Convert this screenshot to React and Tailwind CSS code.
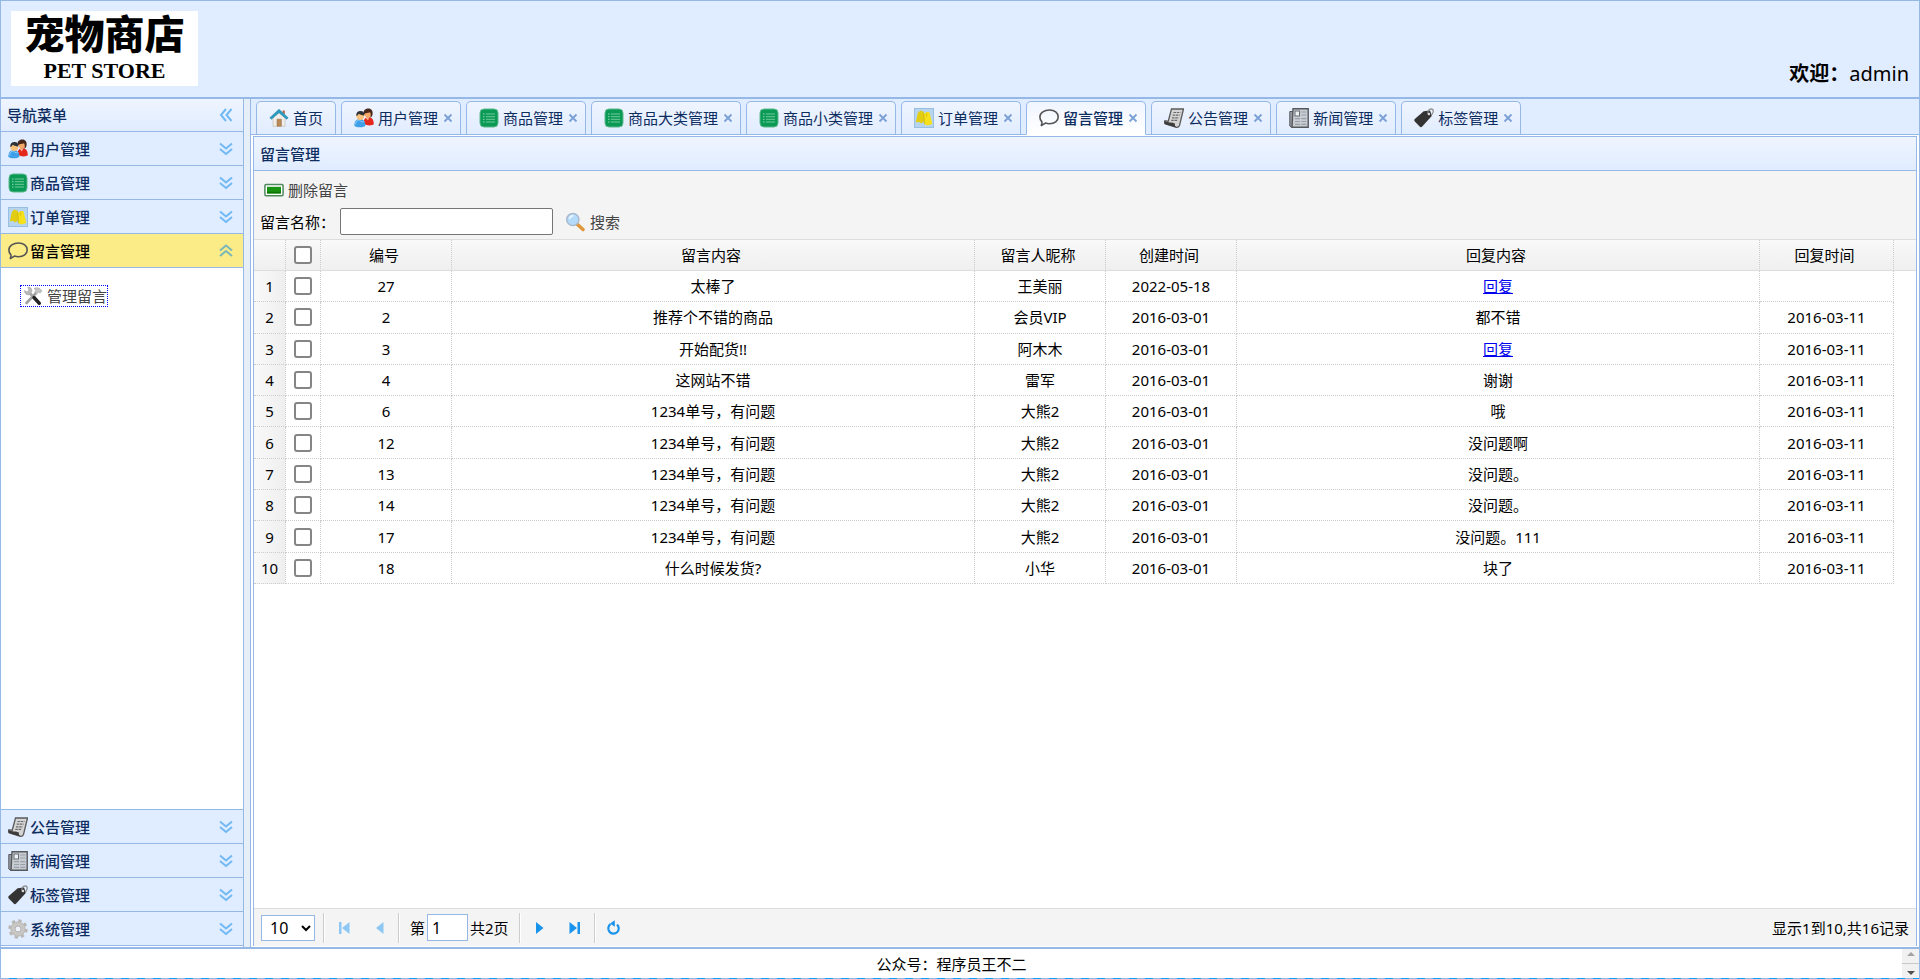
import React, { useState } from "react";

const MENU_TOP = [
  { label: "用户管理", icon: "users" },
  { label: "商品管理", icon: "list" },
  { label: "订单管理", icon: "order" },
];
const MENU_BOTTOM = [
  { label: "公告管理", icon: "scroll" },
  { label: "新闻管理", icon: "news" },
  { label: "标签管理", icon: "tag" },
  { label: "系统管理", icon: "gear" },
];
const TABS = [
  { label: "首页", icon: "home", fixed: true },
  { label: "用户管理", icon: "users" },
  { label: "商品管理", icon: "list" },
  { label: "商品大类管理", icon: "list" },
  { label: "商品小类管理", icon: "list" },
  { label: "订单管理", icon: "order" },
  { label: "留言管理", icon: "bubble", active: true },
  { label: "公告管理", icon: "scroll" },
  { label: "新闻管理", icon: "news" },
  { label: "标签管理", icon: "tag" },
];
const ROWS = [
  ["27", "太棒了", "王美丽", "2022-05-18", null, ""],
  ["2", "推荐个不错的商品", "会员VIP", "2016-03-01", "都不错", "2016-03-11"],
  ["3", "开始配货!!", "阿木木", "2016-03-01", null, "2016-03-11"],
  ["4", "这网站不错", "雷军", "2016-03-01", "谢谢", "2016-03-11"],
  ["6", "1234单号，有问题", "大熊2", "2016-03-01", "哦", "2016-03-11"],
  ["12", "1234单号，有问题", "大熊2", "2016-03-01", "没问题啊", "2016-03-11"],
  ["13", "1234单号，有问题", "大熊2", "2016-03-01", "没问题。", "2016-03-11"],
  ["14", "1234单号，有问题", "大熊2", "2016-03-01", "没问题。", "2016-03-11"],
  ["17", "1234单号，有问题", "大熊2", "2016-03-01", "没问题。111", "2016-03-11"],
  ["18", "什么时候发货?", "小华", "2016-03-01", "块了", "2016-03-11"],
];

const ART = {
  home: (
    <>
      <path d="M4 9.5v8.8h12V9.5L10 4z" fill="#f1eeea" stroke="#c9c4be" strokeWidth=".8" />
      <path d="M8 11.2h4.4v7H8z" fill="#b98a58" stroke="#8f6a44" strokeWidth=".5" />
      <path d="M13.6 2.5h2.2v4l-2.2-2z" fill="#b9624a" />
      <path d="M.8 9.8 10 1.2l9.2 8.6-1.6 1.5L10 4.8l-7.6 6.5z" fill="#2b9bc0" stroke="#1d7f9f" strokeWidth=".5" />
    </>
  ),
  users: (
    <>
      <path d="M9.500 15.500c0-4 1.500-6.300 5-6.300s5.300 2.600 5.300 7.100c-1.800 1.500-7 1.700-10.300-.8z" fill="#e5281c" />
      <path d="M11.300 9.200h4l-1.400 3.300z" fill="#f6b98a" />
      <circle cx="14" cy="5.300" r="3.900" fill="#f3a968" />
      <path d="M9.500 6.500C9 2.500 11 .4 14.200.4c3.300 0 5 2.300 4.300 6.300-.4 1.600-1.200 2.500-2.200 3 .7-2.300.6-4-.3-5.400-2 .9-4.500.6-6.500 2.200z" fill="#47271a" />
      <path d="M.3 17.800c0-4.500 2-6.900 5.500-6.900s5.600 2.400 5.600 6.900c-2.400 2-8.700 2-11.100 0z" fill="#3fa0ea" />
      <path d="M1.500 16.500c.3-2.900 1.700-4.300 4-4.500 1.800 2 3.300 2.200 5 1.500" fill="none" stroke="#8ccbf8" strokeWidth="1" />
      <circle cx="6.300" cy="8" r="3.900" fill="#fbc27e" />
      <path d="M2.300 8C2 4.500 3.800 3 6.600 3.100c2.600 0 4.100 1.700 3.700 4.400-2.800-.2-4.700-1-5.600-1.800C4.200 7 3.300 7.500 2.300 8z" fill="#2e3338" />
    </>
  ),
  list: (
    <>
      <rect x="1" y="1" width="18" height="18" rx="4" fill="#0a9a56" stroke="#5db98c" strokeWidth="1" />
      <path d="M4 6h1.500M4 8.700h1.500M4 11.300h1.500M4 14h1.500" stroke="#8fd6b2" strokeWidth="1" />
      <path d="M6.800 6H16M6.800 8.700H16M6.800 11.300H16M6.800 14H16" stroke="#6fc99b" strokeWidth="1" />
    </>
  ),
  order: (
    <>
      <rect x=".5" y=".5" width="19" height="19" fill="#b6d4ee" stroke="#98bfe2" />
      <path d="m1.800 14.500 2-9.500 2.500-2.500 3.500 1.300.5 9.200-3 2.500-2.500-1.800z" fill="#e3cd12" />
      <path d="m9.800 6 2.500-2 3.200.3L18.300 16l-4.800 1.500-3.300-1.200z" fill="#f6e01a" />
      <path d="m9.700 5.500.7 10.500M12.800 5.500l-.2 3" stroke="#c9b20c" strokeWidth=".8" />
    </>
  ),
  bubble: (
    <path
      d="M10.500 2c5 0 8.700 2.900 8.700 6.900s-3.700 6.900-8.700 6.900c-1.500 0-2.800-.2-4-.7L2 17.800c1-1.500 1.100-2.600.9-3.900C1.600 12.600.9 10.800.9 8.900.9 4.900 5.500 2 10.500 2z"
      fill="none"
      stroke="#555"
      strokeWidth="1.600"
    />
  ),
  scroll: (
    <>
      <path d="M7.500 1h12L15.500 17.500c-.6 1.300-1.500 2-3 1.800L1 15.700c-.8-1.200-.8-2 0-3l3.200.8z" fill="#d4d4d4" stroke="#5a5a5a" strokeWidth="1.300" />
      <path d="M.6 13c3 1.700 8 1.200 10.400 2.600-.5 1.700.2 3 1.500 3.800L2 16.600C.7 15.600.3 14.300.6 13z" fill="#3d3d3d" />
      <path d="M9.500 4.500h7M8.700 7.200h7M8 9.800h6.800M7.300 12.300h6.600" stroke="#6a6a6a" strokeWidth="1.200" strokeDasharray="2.500 .7" />
    </>
  ),
  news: (
    <>
      <path d="M.8 3.500H4V19H2L.8 18z" fill="#9a9fa5" stroke="#55585d" />
      <path d="M4 .8h15.200v18.400H3z" fill="#c7ccd2" stroke="#55585d" strokeWidth="1.400" />
      <rect x="6" y="3" width="4.500" height="5" fill="#eef1f4" stroke="#686c72" />
      <path d="M12.300 4h5M12.300 7h5M6 10.700h5M12.300 10.700h5M6 13.500h5M12.300 13.500h5M6 16.300h5M12.300 16.300h5" stroke="#9aa0a7" strokeWidth="1.200" />
    </>
  ),
  tag: (
    <>
      <path d="M9.700 3.200 16 2.500l2 5.300L8.200 18.600c-.8.7-1.700.7-2.500 0L.8 13.400c-.7-.8-.7-1.500 0-2.300z" fill="#333" />
      <path d="M14.500 7c-1.600-3 0-6 2.500-6.200C20 .8 20 4.500 17.200 7.500" fill="none" stroke="#8b8b8b" strokeWidth="1.200" />
      <circle cx="15" cy="6" r="1.200" fill="#ddd" />
    </>
  ),
  gear: (
    <>
      <circle cx="10" cy="10" r="8" fill="none" stroke="#b9b7b4" strokeWidth="3.400" strokeDasharray="3.140 3.140" />
      <circle cx="10" cy="10" r="5.300" fill="none" stroke="#c9c7c4" strokeWidth="4" />
      <circle cx="10" cy="10" r="7.200" fill="none" stroke="#b3b1ae" strokeWidth=".7" />
      <circle cx="10" cy="10" r="3" fill="#eef2f8" stroke="#a3a19e" strokeWidth=".8" />
    </>
  ),
  tools: (
    <>
      <path d="M6 6.500 16.500 17" stroke="#a5a5a5" strokeWidth="2.600" strokeLinecap="round" />
      <path d="M1.500 4.500 4 6l2-2L4.800 1.400c3-.4 4.700 1.800 3.900 4.600L6 8.800C3.500 9.300 1.300 7.500 1.500 4.500z" fill="#b9b9b9" stroke="#999" strokeWidth=".5" />
      <path d="M13.500 6.500 3.500 17" stroke="#a0a0a0" strokeWidth="2.600" strokeLinecap="round" />
      <path d="M11 2.500c3-1.600 6-.6 8 2.600l-2 2-1.700-.9-1.800 1.700-2-2 1.400-1.600z" fill="#c4c4c4" stroke="#999" strokeWidth=".5" />
      <path d="m11 11.500 5.300 5.800" stroke="#222" strokeWidth="3.400" strokeLinecap="round" />
    </>
  ),
  minus: (
    <>
      <rect x=".9" y="4.600" width="18.200" height="11.200" rx="1.200" fill="#fff" stroke="#4f8a5c" strokeWidth="1.500" />
      <rect x="3" y="6.800" width="14" height="6.800" fill="#18930f" />
      <path d="M3 12.500h14" stroke="#0c7306" strokeWidth="1.500" />
    </>
  ),
  search: (
    <>
      <path d="m12 12 6 5.600" stroke="#e0973c" strokeWidth="3.400" strokeLinecap="round" />
      <circle cx="7.800" cy="7.500" r="6.100" fill="#b5dbfb" stroke="#a8b9cf" strokeWidth="1.500" />
      <path d="M4.500 7c.3-2 1.800-3.300 4-3.400" fill="none" stroke="#eaf6ff" strokeWidth="1.800" />
    </>
  ),
};

function Icon({ name }) {
  return (
    <svg viewBox="0 0 20 20" className="size-5 shrink-0" aria-hidden="true">
      {ART[name]}
    </svg>
  );
}

function Chevrons({ turn }) {
  const paths = {
    down: "M2 2.500 8 7.500l6-5M2 8l6 5 6-5",
    up: "M2 7.500 8 2.500l6 5M2 13l6-5 6 5",
    left: "M8 2 3 8l5 6M13.500 2l-5 6 5 6",
  };
  return (
    <svg viewBox="0 0 16 16" className="size-4 shrink-0" aria-hidden="true">
      <path d={paths[turn]} fill="none" stroke={turn === "up" ? "#7bb7b8" : "#71b9f5"} strokeWidth="2" />
    </svg>
  );
}

function MenuHeader({ item, open }) {
  return (
    <button
      type="button"
      aria-expanded={!!open}
      className={`flex h-[34px] w-full shrink-0 items-center border-b border-[#95b8e7] pl-[7px] pr-[9px] text-left font-medium ${
        open ? "bg-[#fbec88] text-black" : "bg-[#e0ecff] text-[#0e2d5f]"
      }`}
    >
      <Icon name={item.icon} />
      <span className="ml-0.5 grow">{item.label}</span>
      <Chevrons turn={open ? "up" : "down"} />
    </button>
  );
}

function Tab({ tab }) {
  return (
    <li
      className={`flex items-center rounded-t-[5px] border border-[#95b8e7] ${
        tab.active
          ? "-mb-px h-[34px] border-b-white bg-linear-to-b from-[#eff5ff] to-white font-medium"
          : "h-[33px] border-b-0 bg-linear-to-b from-[#eff5ff] to-[#e0ecff]"
      }`}
    >
      <button
        type="button"
        aria-current={tab.active ? "page" : undefined}
        className={`flex h-full items-center gap-1 pl-3 text-[#0e2d5f] ${tab.fixed ? "pr-3" : ""}`}
      >
        <Icon name={tab.icon} />
        {tab.label}
      </button>
      {!tab.fixed && (
        <button type="button" aria-label={`关闭${tab.label}`} className="mr-0.5 flex h-full w-5 items-center justify-center">
          <svg viewBox="0 0 10 10" className="size-2.5" aria-hidden="true">
            <path d="m1.500 1.500 7 7m0-7-7 7" stroke="#7ba0d6" strokeWidth="1.800" />
          </svg>
        </button>
      )}
    </li>
  );
}

function PageButton({ label, muted, children }) {
  return (
    <button type="button" aria-label={label} disabled={muted} className="flex size-[35px] items-center justify-center">
      <svg viewBox="0 0 16 16" className={muted ? "size-4 text-[#8cc8f3]" : "size-4 text-[#1894ec]"} aria-hidden="true">
        {children}
      </svg>
    </button>
  );
}

const Divider = () => <span className="h-[30px] w-0.5 shrink-0 border-l border-r border-l-[#ccc] border-r-white" />;

const CELL = "border-b border-r border-dotted border-[#ccc] p-0 text-center font-normal";
const HEAD = "border-b border-r border-[#ddd] [border-right-style:dotted] [border-right-color:#ccc] p-0 text-center font-normal";

function Check({ label }) {
  return (
    <input
      type="checkbox"
      aria-label={label}
      className="mx-auto block size-[18px] appearance-none rounded-[3px] border-2 border-[#858585] bg-white"
    />
  );
}

export default function App() {
  const [name, setName] = useState("");
  const [page, setPage] = useState("1");

  return (
    <div className="flex h-screen flex-col overflow-hidden border border-b-0 border-[#95b8e7] bg-white text-[15px] leading-5 text-black [font-family:'Noto_Sans','Noto_Sans_CJK_SC',sans-serif]">
      <header className="flex h-[97px] shrink-0 items-end justify-between border-b border-[#95b8e7] bg-[#e0ecff] px-2.5 pb-[11px]">
        <div className="flex h-[75px] w-[187px] flex-col items-center bg-white">
          <span className="text-[40px] leading-[48px] font-black [font-family:'Liberation_Sans','Noto_Sans_CJK_SC',sans-serif]">宠物商店</span>
          <span className="text-[22px] leading-6 font-bold [font-family:'Liberation_Serif',serif]">PET STORE</span>
        </div>
        <p className="text-[20px] leading-6">
          <strong className="font-bold">欢迎：</strong>admin
        </p>
      </header>

      <div className="flex min-h-0 grow border-y border-[#95b8e7]">
        <nav className="flex w-[243px] shrink-0 flex-col border-r border-[#95b8e7] pb-px" aria-label="导航菜单">
          <div className="flex h-[33px] shrink-0 items-center justify-between border-b border-[#95b8e7] bg-linear-to-b from-[#eff5ff] to-[#e0ecff] pl-1.5 pr-[9px] font-medium text-[#0e2d5f]">
            <h2>导航菜单</h2>
            <button type="button" aria-label="收起导航">
              <Chevrons turn="left" />
            </button>
          </div>
          {MENU_TOP.map((m) => (
            <MenuHeader key={m.label} item={m} />
          ))}
          <MenuHeader item={{ label: "留言管理", icon: "bubble" }} open />
          <div className="grow border-b border-[#95b8e7] px-[19px] py-[17px]">
            <a href="#messages" className="inline-flex items-center gap-1 border border-dotted border-[#0000ff] pl-0.5 text-[#444]">
              <Icon name="tools" />
              管理留言
            </a>
          </div>
          {MENU_BOTTOM.map((m) => (
            <MenuHeader key={m.label} item={m} />
          ))}
        </nav>

        <div className="w-1.5 shrink-0 bg-[#e6eef8]" />

        <main className="flex min-w-0 grow flex-col border-l border-[#95b8e7]">
          <ul className="flex h-9 shrink-0 items-end gap-[5px] border-b border-[#95b8e7] bg-[#e0ecff] pl-[5px]">
            {TABS.map((t) => (
              <Tab key={t.label} tab={t} />
            ))}
          </ul>

          <section className="mx-0.5 mt-px mb-px flex min-h-0 grow flex-col border border-b-0 border-[#95b8e7]">
            <h1 className="flex h-[34px] shrink-0 items-center border-b border-[#95b8e7] bg-linear-to-b from-[#eff5ff] to-[#e0ecff] px-1.5 font-medium text-[#0e2d5f]">
              留言管理
            </h1>
            <div className="flex h-[69px] shrink-0 flex-col border-b border-[#ddd] bg-[#f4f4f4] px-1.5">
              <div className="flex h-[37px] items-center pl-1">
                <button type="button" className="flex items-center gap-1 text-[#444]">
                  <Icon name="minus" />
                  删除留言
                </button>
              </div>
              <div className="flex items-center">
                <label htmlFor="msg-name" className="w-20">
                  留言名称：
                </label>
                <input
                  id="msg-name"
                  type="text"
                  value={name}
                  onChange={(e) => setName(e.target.value)}
                  className="h-[27px] w-[213px] rounded-xs border border-[#767676] bg-white px-1"
                />
                <button type="button" className="ml-3 flex items-center gap-[5px] text-[#444]">
                  <Icon name="search" />
                  搜索
                </button>
              </div>
            </div>

            <div className="min-h-0 grow overflow-hidden">
              <table className="h-[344px] w-full table-fixed border-separate border-spacing-0">
                <colgroup>
                  <col className="w-8" />
                  <col className="w-[35px]" />
                  <col className="w-[131px]" />
                  <col />
                  <col className="w-[131px]" />
                  <col className="w-[131px]" />
                  <col />
                  <col className="w-[134px]" />
                  <col className="w-[22px]" />
                </colgroup>
                <thead>
                  <tr className="h-[31px] bg-linear-to-b from-[#f9f9f9] to-[#efefef]">
                    <th className={HEAD} />
                    <th className={HEAD}>
                      <Check label="全选" />
                    </th>
                    <th className={`${HEAD} pr-1`}>编号</th>
                    <th className={`${HEAD} pr-1`}>留言内容</th>
                    <th className={`${HEAD} pr-1`}>留言人昵称</th>
                    <th className={`${HEAD} pr-1`}>创建时间</th>
                    <th className={`${HEAD} pr-1`}>回复内容</th>
                    <th className={`${HEAD} pr-1`}>回复时间</th>
                    <th className="border-b border-[#ddd] p-0" />
                  </tr>
                </thead>
                <tbody>
                  {ROWS.map((r, i) => (
                    <tr key={r[0]}>
                      <td className={`${CELL} bg-linear-to-r from-[#f9f9f9] to-[#efefef]`}>{i + 1}</td>
                      <td className={CELL}>
                        <Check label={`选择 ${r[0]}`} />
                      </td>
                      <td className={CELL}>{r[0]}</td>
                      <td className={CELL}>{r[1]}</td>
                      <td className={CELL}>{r[2]}</td>
                      <td className={CELL}>{r[3]}</td>
                      <td className={CELL}>
                        {r[4] ?? (
                          <a href="#reply" className="text-[#0000ee] underline">
                            回复
                          </a>
                        )}
                      </td>
                      <td className={CELL}>{r[5]}</td>
                      <td />
                    </tr>
                  ))}
                </tbody>
              </table>
            </div>

            <footer className="flex h-[38px] shrink-0 items-center border-t border-[#ddd] bg-[#f4f4f4] px-[7px]">
              <select
                aria-label="每页条数"
                defaultValue="10"
                className="mr-2 h-[26px] w-[54px] border border-[#95b8e7] bg-white pl-1 text-[16px] leading-5"
              >
                <option>10</option>
                <option>20</option>
                <option>50</option>
              </select>
              <Divider />
              <div className="flex w-[73px] justify-center">
                <PageButton label="首页" muted>
                  <path d="M3 2h2.500v12H3zM13.500 2v12L6 8z" fill="currentColor" />
                </PageButton>
                <PageButton label="上一页" muted>
                  <path d="M12.500 2v12L5 8z" fill="currentColor" />
                </PageButton>
              </div>
              <Divider />
              <label className="ml-2.5 flex items-center gap-0.5">
                第
                <input
                  value={page}
                  onChange={(e) => setPage(e.target.value)}
                  className="h-[27px] w-[41px] border border-[#95b8e7] bg-white px-1 text-[16px]"
                />
              </label>
              <span className="ml-0.5 mr-2.5">共2页</span>
              <Divider />
              <div className="flex w-[73px] justify-center">
                <PageButton label="下一页">
                  <path d="M4 2v12l7.500-6z" fill="currentColor" />
                </PageButton>
                <PageButton label="末页">
                  <path d="M10.500 2H13v12h-2.500zM2.500 2v12L10 8z" fill="currentColor" />
                </PageButton>
              </div>
              <Divider />
              <PageButton label="刷新">
                <path d="M5.500 4.200A5.200 5.200 0 1 0 12 4.600" fill="none" stroke="currentColor" strokeWidth="2.200" />
                <path d="M9.800.3v6.500L5 3.600z" fill="currentColor" />
              </PageButton>
              <span className="ml-auto">显示1到10,共16记录</span>
            </footer>
          </section>
        </main>
      </div>

      <footer className="flex h-[30px] shrink-0 border-t border-[#95b8e7] bg-white">
        <p className="grow self-center text-center">公众号：程序员王不二</p>
        <div className="flex w-[17px] flex-col items-center justify-around bg-[#f1f1f1]" aria-hidden="true">
          <svg viewBox="0 0 8 4" className="h-1 w-2">
            <path d="M0 4h8L4 0z" fill="#a3a3a3" />
          </svg>
          <span className="h-px w-full bg-[#c8c8c8]" />
          <svg viewBox="0 0 8 4" className="h-1 w-2">
            <path d="M0 0h8L4 4z" fill="#505050" />
          </svg>
        </div>
      </footer>
      <div className="h-px shrink-0 bg-[repeating-linear-gradient(to_right,#95b8e7_0_8px,#08a0ff_8px_16px)]" />
    </div>
  );
}
